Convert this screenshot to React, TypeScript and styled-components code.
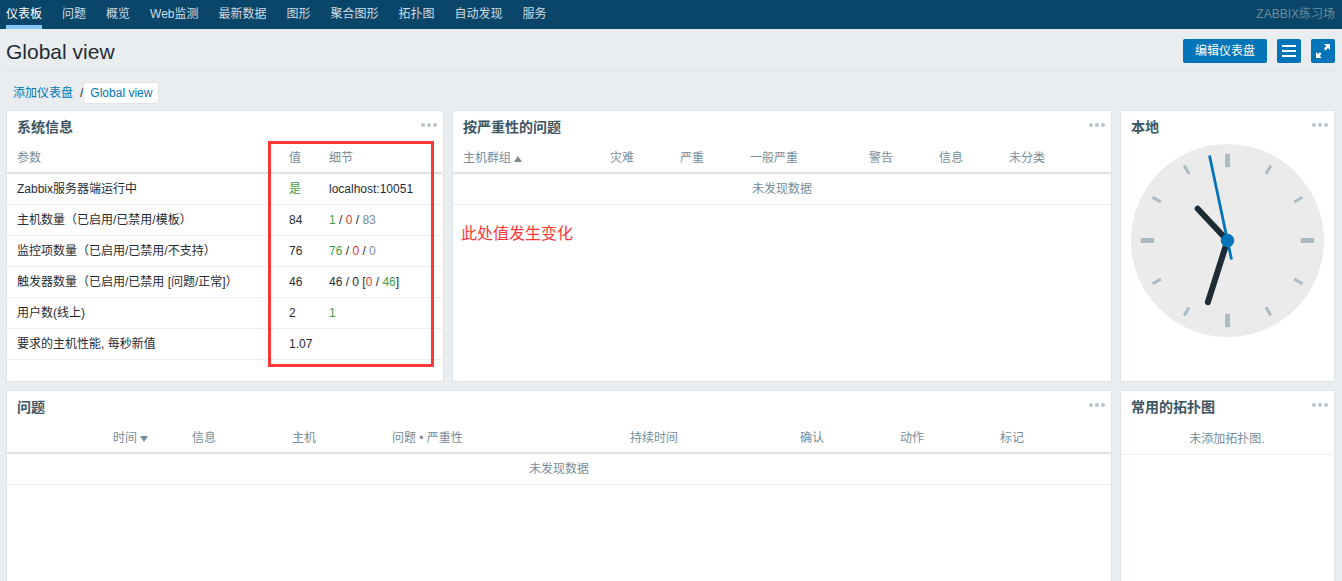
import React from 'react';
import styled, { createGlobalStyle } from 'styled-components';

const GlobalStyle = createGlobalStyle`
  * { box-sizing: border-box; }
  body {
    margin: 0;
    background: #e9edf0;
    color: #1f2c33;
    font: 12px/14px "Liberation Sans", "Noto Sans CJK SC", sans-serif;
    overflow: hidden;
  }
`;

const Page = styled.div`
  position: relative;
  display: flex;
  flex-direction: column;
  height: 581px;
  overflow: hidden;
`;

const TopNav = styled.nav`
  display: flex;
  gap: 20px;
  flex: none;
  height: 29px;
  padding: 0 7px 0 6px;
  background: #0a466a;
`;

const NavItem = styled.a<{ $active?: boolean }>`
  height: 29px;
  line-height: 29px;
  white-space: nowrap;
  color: ${(p) => (p.$active ? '#ffffff' : '#cfdbe2')};
  box-shadow: ${(p) => (p.$active ? 'inset 0 -4px 0 #81c9f7' : 'none')};
`;

const ServerName = styled.span`
  margin-left: auto;
  line-height: 29px;
  color: #6c8b9d;
`;

const Header = styled.header`
  display: flex;
  align-items: center;
  flex: none;
  gap: 10px;
  height: 42px;
  margin: 0 7px 0 6px;
  padding-top: 2px;
  border-bottom: 1px solid #dfe4e7;
`;

const PageTitle = styled.h1`
  flex: 1;
  margin: 0;
  padding-top: 2px;
  font-size: 21px;
  line-height: 24px;
  font-weight: 400;
`;

const Button = styled.button<{ $icon?: boolean }>`
  display: flex;
  align-items: center;
  justify-content: center;
  width: ${(p) => (p.$icon ? '24px' : '84px')};
  height: 24px;
  margin-top: 1px;
  padding: 0;
  border: 0;
  border-radius: 2px;
  background: #0275b8;
  color: #fff;
  font: inherit;
`;

const Breadcrumbs = styled.div`
  display: flex;
  align-items: center;
  flex: none;
  height: 21px;
  margin: 11px 0 7px 13px;
`;

const Crumb = styled.a<{ $selected?: boolean }>`
  color: #0275b8;
  height: 22px;
  line-height: ${(p) => (p.$selected ? '20px' : '22px')};
  padding: ${(p) => (p.$selected ? '0 6px' : '0')};
  background: ${(p) => (p.$selected ? '#fff' : 'none')};
  border: ${(p) => (p.$selected ? '1px solid #dfe4e7' : '0')};
  border-radius: 2px;
`;

const Slash = styled.span`
  padding-left: 7px;
`;

const Dashboard = styled.main`
  display: grid;
  flex: none;
  grid-template-columns: 438px 660px 215px;
  grid-template-rows: 272px 272px;
  gap: 8px 8px;
  padding-left: 6px;
`;

const Panel = styled.section<{ $wide?: boolean }>`
  grid-column: ${(p) => (p.$wide ? 'span 2' : 'auto')};
  background: #fff;
  border: 1px solid #dfe4e7;
`;

const PanelHead = styled.div`
  display: flex;
  justify-content: space-between;
  height: 32px;
  padding: 0 6px 0 10px;
`;

const PanelTitle = styled.h4`
  margin: 0;
  font-size: 14px;
  line-height: 32px;
  font-weight: 700;
  color: #3c5563;
`;

const MoreIcon = styled.svg`
  margin-top: 12px;
`;

const Table = styled.div<{ $inset?: boolean }>`
  margin-right: ${(p) => (p.$inset ? '1px' : '0')};
`;

const Row = styled.div<{ $cols?: string; $head?: boolean; $height?: number }>`
  display: grid;
  grid-template-columns: ${(p) => p.$cols ?? '1fr'};
  height: ${(p) => p.$height ?? 31}px;
  line-height: ${(p) => (p.$head ? 31 : p.$height ? p.$height + 1 : 30)}px;
  border-bottom: ${(p) => (p.$head ? '2px solid #dce2e5' : '1px solid #ebeef0')};
  color: ${(p) => (p.$head ? '#768d99' : 'inherit')};
`;

const Cell = styled.div`
  white-space: nowrap;
`;

const Empty = styled.div`
  text-align: center;
  color: #768d99;
`;

const tones = { green: '#429e47', red: '#e33734', grey: '#768d99' };
const Tone = styled.span<{ $t: keyof typeof tones }>`
  color: ${(p) => tones[p.$t]};
`;

const SortArrow = styled.i<{ $up?: boolean }>`
  display: inline-block;
  margin-left: 3px;
  border: 4px solid transparent;
  border-top: ${(p) => (p.$up ? '0' : '6px solid #768d99')};
  border-bottom: ${(p) => (p.$up ? '6px solid #768d99' : '0')};
`;

const ClockFace = styled.svg`
  display: block;
  margin: 1px 0 0 10px;
`;

const Highlight = styled.div`
  position: absolute;
  left: 268px;
  top: 141px;
  width: 166px;
  height: 226px;
  border: 3px solid #fb3838;
`;

const Note = styled.div`
  position: absolute;
  left: 461px;
  top: 224px;
  font-size: 16px;
  line-height: 20px;
  color: #fb3838;
`;

const More = () => (
  <MoreIcon width="16" height="4" viewBox="0 0 16 4" fill="#b9c5cc">
    <circle cx="2" cy="2" r="2" />
    <circle cx="8" cy="2" r="2" />
    <circle cx="14" cy="2" r="2" />
  </MoreIcon>
);

type WidgetProps = { title: string; wide?: boolean; children: React.ReactNode };
const Widget = ({ title, wide, children }: WidgetProps) => (
  <Panel $wide={wide}>
    <PanelHead>
      <PanelTitle>{title}</PanelTitle>
      <More />
    </PanelHead>
    {children}
  </Panel>
);

const Clock = () => (
  <ClockFace width="193" height="193" viewBox="-96.5 -96.5 193 193">
    <circle r="96.5" fill="#ebebeb" />
    {Array.from({ length: 12 }, (_, i) => {
      const major = i % 3 === 0;
      return (
        <line
          key={i}
          y1={major ? -86.7 : -86.5}
          y2={major ? -73.3 : -77}
          stroke="#acbbc2"
          strokeWidth={major ? 5 : 3}
          transform={`rotate(${i * 30})`}
        />
      );
    })}
    <line x2="-29.8" y2="-31.7" stroke="#1f2c33" strokeWidth="6" strokeLinecap="round" />
    <line x2="-19.6" y2="61.6" stroke="#1f2c33" strokeWidth="6" strokeLinecap="round" />
    <line x1="4" y1="19" x2="-18" y2="-85" stroke="#0275b8" strokeWidth="2.8" />
    <circle r="6.7" fill="#0275b8" />
  </ClockFace>
);

const navItems = ['仪表板', '问题', '概览', 'Web监测', '最新数据', '图形', '聚合图形', '拓扑图', '自动发现', '服务'];

const systemCols = '282px 40px 1fr';
const systemRows: [string, React.ReactNode, React.ReactNode][] = [
  ['Zabbix服务器端运行中', <Tone $t="green">是</Tone>, 'localhost:10051'],
  ['主机数量（已启用/已禁用/模板）', '84', <><Tone $t="green">1</Tone> / <Tone $t="red">0</Tone> / <Tone $t="grey">83</Tone></>],
  ['监控项数量（已启用/已禁用/不支持）', '76', <><Tone $t="green">76</Tone> / <Tone $t="red">0</Tone> / <Tone $t="grey">0</Tone></>],
  ['触发器数量（已启用/已禁用 [问题/正常]）', '46', <>46 / 0 [<Tone $t="red">0</Tone> / <Tone $t="green">46</Tone>]</>],
  ['用户数(线上)', '2', <Tone $t="green">1</Tone>],
  ['要求的主机性能, 每秒新值', '1.07', ''],
];

const SystemTable = styled(Table)`
  & ${Cell}:first-child { padding-left: 10px; }
`;

const severityCols = '147px 70px 70px 119px 70px 70px 1fr';
const problemCols = '79px 100px 100px 238px 170px 100px 100px 1fr';

const SeverityHead = styled(Row)`
  padding-left: 10px;
`;

const ProblemHead = styled(Row)`
  padding-left: 106px;
`;

export default function App() {
  return (
    <Page>
      <GlobalStyle />
      <TopNav>
        {navItems.map((label, i) => (
          <NavItem key={label} $active={i === 0}>{label}</NavItem>
        ))}
        <ServerName>ZABBIX练习场</ServerName>
      </TopNav>
      <Header>
        <PageTitle>Global view</PageTitle>
        <Button>编辑仪表盘</Button>
        <Button $icon>
          <svg width="14" height="12" viewBox="0 0 14 12" fill="#fff">
            <path d="M0 0h14v2H0zM0 5h14v2H0zM0 10h14v2H0z" />
          </svg>
        </Button>
        <Button $icon>
          <svg width="14" height="14" viewBox="0 0 14 14" fill="#fff">
            <path d="M8 0h6v6l-2-2-2.4 2.4-1.6-1.6L10.2 2zM0 8l2 2 1.8-1.8 1.6 1.6L3.8 12l2 2H0z" />
          </svg>
        </Button>
      </Header>
      <Breadcrumbs>
        <Crumb>添加仪表盘</Crumb>
        <Slash>/</Slash>
        <Crumb $selected>Global view</Crumb>
      </Breadcrumbs>
      <Dashboard>
        <Widget title="系统信息">
          <SystemTable $inset>
            <Row $head $cols={systemCols}>
              <Cell>参数</Cell>
              <Cell>值</Cell>
              <Cell>细节</Cell>
            </Row>
            {systemRows.map(([name, value, detail]) => (
              <Row key={name} $cols={systemCols}>
                <Cell>{name}</Cell>
                <Cell>{value}</Cell>
                <Cell>{detail}</Cell>
              </Row>
            ))}
          </SystemTable>
        </Widget>
        <Widget title="按严重性的问题">
          <Table>
            <SeverityHead $head $cols={severityCols}>
              <Cell>主机群组<SortArrow $up /></Cell>
              {['灾难', '严重', '一般严重', '警告', '信息', '未分类'].map((t) => <Cell key={t}>{t}</Cell>)}
            </SeverityHead>
            <Row><Empty>未发现数据</Empty></Row>
          </Table>
        </Widget>
        <Widget title="本地">
          <Clock />
        </Widget>
        <Widget title="问题" wide>
          <Table>
            <ProblemHead $head $cols={problemCols}>
              <Cell>时间<SortArrow /></Cell>
              {['信息', '主机', '问题 • 严重性', '持续时间', '确认', '动作', '标记'].map((t) => <Cell key={t}>{t}</Cell>)}
            </ProblemHead>
            <Row><Empty>未发现数据</Empty></Row>
          </Table>
        </Widget>
        <Widget title="常用的拓扑图">
          <Table $inset>
            <Row $height={32}><Empty>未添加拓扑图.</Empty></Row>
          </Table>
        </Widget>
      </Dashboard>
      <Highlight />
      <Note>此处值发生变化</Note>
    </Page>
  );
}
